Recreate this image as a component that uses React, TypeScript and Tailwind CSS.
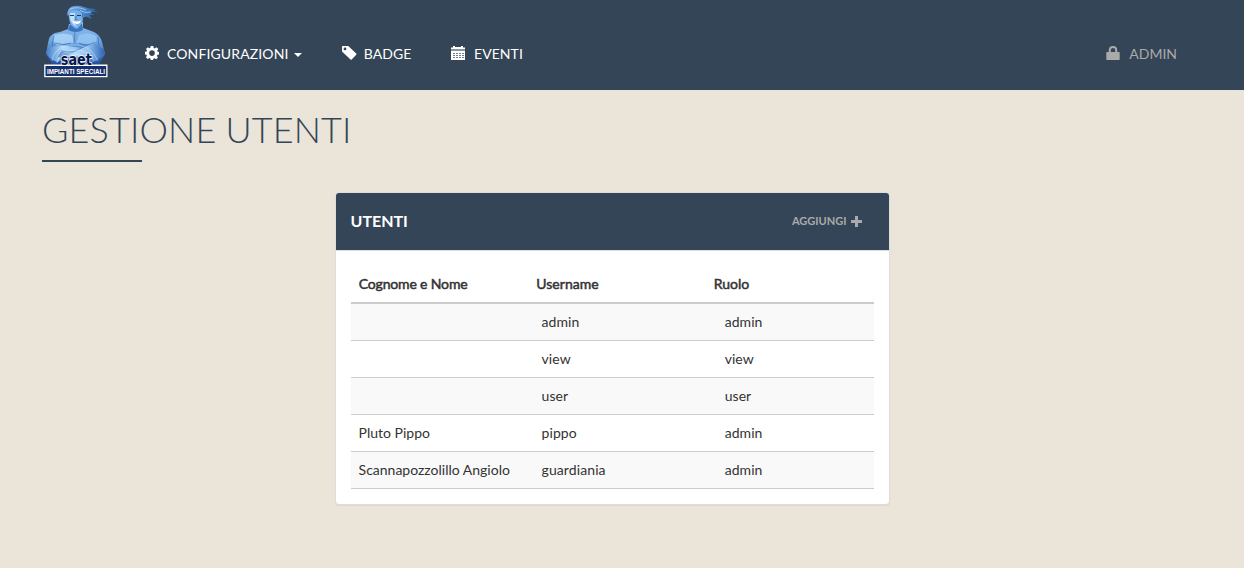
import React from 'react';

const users = [
  { name: '', username: 'admin', role: 'admin' },
  { name: '', username: 'view', role: 'view' },
  { name: '', username: 'user', role: 'user' },
  { name: 'Pluto Pippo', username: 'pippo', role: 'admin' },
  { name: 'Scannapozzolillo Angiolo', username: 'guardiania', role: 'admin' },
];

function Logo() {
  return (
    <svg className="ml-[43px] mt-[4px] h-[74px] w-[66px] shrink-0 overflow-visible" viewBox="0 0 66 74">
      <defs>
        <linearGradient id="body" x1="0" y1="0" x2="0" y2="1">
          <stop offset="0" stopColor="#8fc0f0" />
          <stop offset=".45" stopColor="#6ca5df" />
          <stop offset="1" stopColor="#1d4c9c" />
        </linearGradient>
        <linearGradient id="arm" x1="0" y1="0" x2="1" y2="0">
          <stop offset="0" stopColor="#3f7cc8" />
          <stop offset=".35" stopColor="#b5dbfa" />
          <stop offset=".65" stopColor="#8dc0ee" />
          <stop offset="1" stopColor="#2b60b0" />
        </linearGradient>
        <linearGradient id="hair" x1="0" y1="0" x2="1" y2="0">
          <stop offset="0" stopColor="#79b2e8" />
          <stop offset=".5" stopColor="#4a86c9" />
          <stop offset="1" stopColor="#235a9c" />
        </linearGradient>
      </defs>
      <path d="M26 20 L25 25 Q18 28 12 29 Q6 31 5 39 L3 50 L10 61 H56 L62 50 L59 38 Q57 31 51 28 L40 24 L40 18Z" fill="url(#body)" />
      <path d="M27 20 Q33 26 39 19 L40 26 Q33 30 25 26Z" fill="#3b74be" />
      <path d="M11 31 Q20 28 29 31 L31 39 L14 41 Q8 37 11 31Z" fill="#b4dafa" opacity=".75" />
      <path d="M36 31 Q46 27 53 32 Q56 37 49 41 L33 39Z" fill="#9ccaf4" opacity=".75" />
      <path d="M32 28 L31 39 M12 39 Q20 42 28 39 M36 39 Q44 43 52 38 M11 32 L9 42 M55 33 L56 42" stroke="#3a6fb9" strokeWidth=".7" fill="none" />
      <path d="M3 47 Q12 39 25 42 L39 44 Q47 40 52 45 L49 50 Q39 49 33 53 L14 58 Q5 55 3 47Z" fill="url(#arm)" />
      <path d="M62 47 Q54 38 44 42 L29 48 L18 48 L15 53 L30 55 L50 58 Q59 55 62 47Z" fill="url(#arm)" />
      <path d="M18 47 L30 48 L43 42 M17 53 L31 54 L49 52" stroke="#3b70b9" strokeWidth=".7" fill="none" />
      <path d="M9 57 Q10 45 25 41 Q47 38 55 57 M14 59 Q16 48 30 46 Q46 45 50 58 M19 60 Q22 51 32 50 Q42 50 45 59" stroke="#d7edff" strokeWidth=".8" fill="none" opacity=".6" />
      <path d="M25 8 Q28 4 35 5 L39 9 L40 16 Q38 22 34 25 Q28 23 26.5 17Z" fill="#78b0e8" />
      <path d="M27 9 L32 9 L31 18 L34 23 Q29 21 27 15Z" fill="#bde0fb" />
      <path d="M27 11.5 H31 M34 11.5 H38" stroke="#173c7d" strokeWidth="1.2" />
      <path d="M33 12 L32.5 15.5 H34.5" stroke="#356cae" strokeWidth=".8" fill="none" />
      <path d="M29.5 17 Q34 18.2 38 16.5 Q37 20.4 33.5 20 Q30.5 19.5 29.5 17Z" fill="#fff" />
      <path d="M24.5 12 Q23.5 5 29 2.5 Q35 .8 41 3 Q46 5 53 5 L50 6.5 L56 7.5 L47 8.5 L51 11 L46 11 L49 15 L43 12.5 L40 14 Q40 9 36 7 Q30 5 27 8Z" fill="url(#hair)" />
      <path d="M27 5 Q35 2 43 6 M37 6.5 Q42 9.5 48 8" stroke="#a9d4f8" strokeWidth=".8" fill="none" />
      <path d="M14 61 L17 55 Q32 50 49 55 L52 61Z" fill="#1b4796" opacity=".55" />
      <rect x="1.2" y="60.5" width="63.3" height="12.7" fill="#fff" />
      <rect x="2.5" y="62" width="60.7" height="10" fill="#17316f" />
      <text x="17.8" y="61.3" textLength="31" lengthAdjust="spacingAndGlyphs" fill="#071750" stroke="#fff" strokeWidth="1.4" paintOrder="stroke" style={{ font: 'bold 15px "DejaVu Sans", sans-serif' }}>saet</text>
      <text x="4" y="70" textLength="58" lengthAdjust="spacingAndGlyphs" fill="#fff" style={{ font: 'bold 7.5px "Liberation Sans", sans-serif' }}>IMPIANTI SPECIALI</text>
    </svg>
  );
}

function Gear() {
  return (
    <svg className="h-[14px] w-[14px]" viewBox="0 0 14 14" fill="currentColor">
      <path fillRule="evenodd" d="M5.7 0h2.6l.4 1.9 1.1.5L11.5 1.3l1.8 1.8-1.1 1.6.5 1.1 1.3.2v2.6l-1.7.3-.4 1 1 1.5-1.8 1.8-1.5-1-1.2.5L8 14H5.8l-.4-1.4-1.1-.5-1.6 1-1.8-1.8 1-1.5-.4-1.1L0 8.4V5.8l1.6-.3.4-1.1L1 3l1.8-1.8 1.5 1 1.1-.5ZM7 4.3a2.8 2.8 0 1 0 0 5.6 2.8 2.8 0 0 0 0-5.6Z" />
    </svg>
  );
}

function Tag() {
  return (
    <svg className="h-[14px] w-[15px]" viewBox="0 0 15 14" fill="currentColor">
      <path fillRule="evenodd" d="M.8 0H6.3L14.2 7.6Q14.8 8.2 14.2 8.8L9.7 13.4Q9.1 14 8.5 13.4L0 5.5V.8Q0 0 .8 0ZM3 1.5a1.4 1.4 0 1 0 0 2.8 1.4 1.4 0 0 0 0-2.8Z" />
    </svg>
  );
}

function Calendar() {
  return (
    <svg className="h-[14px] w-[14px]" viewBox="0 0 14 14">
      <path fill="#fff" d="M0 1.5h2V0h2v1h6V0h2v1.5h2V3H0ZM0 5h14v8.5q0 .5-.5.5H.5q-.5 0-.5-.5Z" />
      <path fill="#8995a1" d="M0 3h14v2H0Z" />
      <path stroke="#71808f" strokeWidth="1" strokeDasharray="2 1" d="M2 7.5h11M2 9.5h11M2 11.5h11" />
    </svg>
  );
}

function Lock() {
  return (
    <svg className="h-[14px] w-[14px]" viewBox="0 0 14 14">
      <path fill="none" stroke="currentColor" strokeWidth="2" d="M3.8 7V4Q3.8 1 7 1T10.2 4V7" />
      <path fill="currentColor" d="M1 6h12q.7 0 .7.7v6.6q0 .7-.7.7H1q-.7 0-.7-.7V6.7Q.3 6 1 6Z" />
    </svg>
  );
}

const headings = [
  { label: 'Cognome e Nome', spacing: 'tracking-[-0.15px]' },
  { label: 'Username', spacing: 'tracking-[0.05px]' },
  { label: 'Ruolo', spacing: 'tracking-normal' },
];

export default function App() {
  return (
    <div className="min-h-[568px] bg-[#ebe4d8] font-['Lato',sans-serif] text-[14px] leading-5 text-[#333]">
      <header className="flex h-[90px] items-start bg-[#344557] text-white">
        <Logo />
        <nav className="ml-[35.5px] mt-[43px] flex h-[22px] flex-1 items-center">
          <a className="flex items-center whitespace-nowrap"><span className="-mt-[2px]"><Gear /></span><span className="ml-[8.5px] tracking-[0.12px]">CONFIGURAZIONI</span><span className="ml-[5px] mt-[2px] border-x-4 border-t-4 border-x-transparent border-t-white" /></a>
          <a className="ml-[40.2px] flex items-center"><span className="-mt-[2px]"><Tag /></span><span className="ml-[7px] tracking-[0.1px]">BADGE</span></a>
          <a className="ml-[39.5px] flex items-center"><span className="-mt-[2px]"><Calendar /></span><span className="ml-[9px] tracking-[0.05px]">EVENTI</span></a>
        </nav>
        <a className="mr-[67px] mt-[43px] flex h-[22px] items-center text-[#aaa]"><span className="-mt-[2px]"><Lock /></span><span className="ml-[9px]">ADMIN</span></a>
      </header>
      <main>
        <h1 className="ml-[42px] w-[400px] pt-[19px] text-[36px] font-light leading-[40px] tracking-[0.13px] text-[#344557] [word-spacing:-0.8px]">GESTIONE UTENTI</h1>
        <div className="ml-[42px] mt-[11px] h-[2px] w-[100px] bg-[#344557]" />
        <section className="ml-[335px] mt-[30px] w-[555px] overflow-hidden rounded-[4px] border border-[#ddd] bg-white shadow-[0_1px_1px_rgba(0,0,0,0.05)]">
          <div className="flex h-[58px] items-center justify-between border-b border-[#ddd] bg-[#344557] pl-[14.5px] pr-[27px]">
            <h2 className="-mt-px text-[16px] font-bold leading-5 text-white">UTENTI</h2>
            <a className="-mt-[2px] flex items-center gap-[4.5px] text-[11px] font-bold text-[#aaa]">AGGIUNGI
              <svg className="mt-px h-[11px] w-[11px]" viewBox="0 0 11 11"><path d="M4 0h3v4h4v3H7v4H4V7H0V4h4Z" fill="currentColor" /></svg>
            </a>
          </div>
          <div className="px-[15px] pb-[15px] pt-[14px]">
            <table className="w-full table-fixed border-collapse text-left">
              <colgroup>
                <col className="w-[177.5px]" />
                <col className="w-[177.5px]" />
                <col />
              </colgroup>
              <thead>
                <tr className="h-[38px] border-b-2 border-[#ccc]">
                  {headings.map((h) => <th key={h.label} className={`${h.spacing} px-[7.7px] font-normal [-webkit-text-stroke:0.5px_#333]`}>{h.label}</th>)}
                </tr>
              </thead>
              <tbody>
                {users.map((u) => (
                  <tr key={u.username} className="h-[37px] border-b border-[#ccc] odd:bg-[#f9f9f9]">
                    <td className="whitespace-nowrap px-[7.6px]">{u.name}</td>
                    <td className="pl-[13px] tracking-[0.1px]">{u.username}</td>
                    <td className="pl-[18.7px] tracking-[0.05px]">{u.role}</td>
                  </tr>
                ))}
              </tbody>
            </table>
          </div>
        </section>
      </main>
    </div>
  );
}
